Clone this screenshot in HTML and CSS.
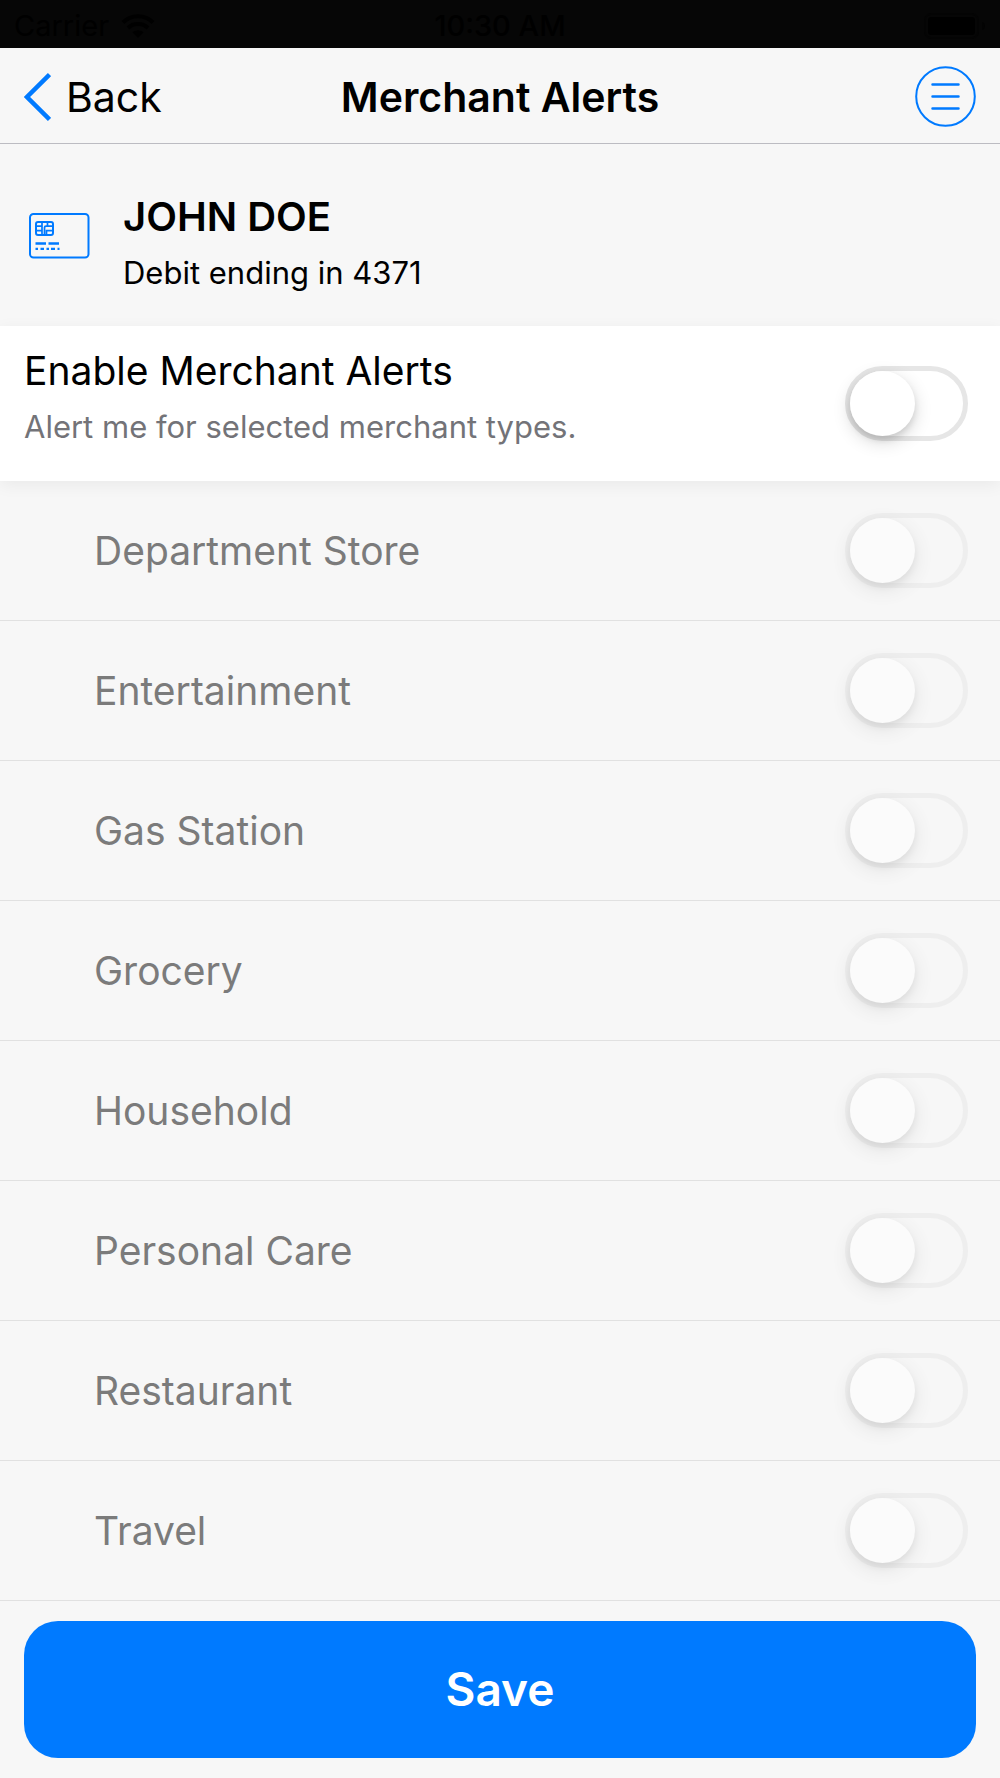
FILE: index.html
```html
<!DOCTYPE html>
<html lang="en">
<head>
<meta charset="utf-8">
<meta name="viewport" content="width=device-width, initial-scale=1">
<title>Merchant Alerts</title>
<link rel="stylesheet" href="styles.css">
</head>
<body>
<div class="status-bar">
  <div class="carrier">
    <span>Carrier</span>
    <svg width="34" height="24" viewBox="0 0 34 24" aria-hidden="true">
      <g fill="none" stroke="#000" stroke-width="4">
        <path d="M2 8.500C10 .2 24 .2 32 8.500"/>
        <path d="M7 14C12.500 8.800 21.500 8.800 27 14"/>
      </g>
      <path fill="#000" d="M11.500 18.200C14.500 15.500 19.500 15.500 22.500 18.200L17 24Z"/>
    </svg>
  </div>
  <span class="clock">10:30 AM</span>
  <svg class="battery" width="62" height="26" viewBox="0 0 62 26" aria-hidden="true">
    <rect x="1" y="1" width="53" height="24" rx="6" fill="none" stroke="#040404" stroke-width="2"/>
    <rect x="4" y="4" width="47" height="18" rx="3" fill="#000"/>
    <path d="M58 9c4 1 4 7 0 8z" fill="#030303"/>
  </svg>
</div>

<header class="nav-bar">
  <a class="back" href="#">
    <svg width="27" height="50" viewBox="0 0 27 50" aria-hidden="true">
      <path d="M25.500 2.500L3 25L25.500 47.500" fill="none" stroke="#007aff" stroke-width="4.500"/>
    </svg>
    <span>Back</span>
  </a>
  <h1 class="title">Merchant Alerts</h1>
  <button class="menu" type="button" aria-label="Menu">
    <svg width="61" height="61" viewBox="0 0 61 61" aria-hidden="true">
      <g fill="none" stroke="#007aff" stroke-width="2" stroke-linecap="round">
        <circle cx="30.500" cy="30.500" r="29.300"/>
        <path d="M17.500 18.500H43.500M17.500 30.500H43.500M17.500 42.500H43.500" stroke-width="2.500"/>
      </g>
    </svg>
  </button>
</header>

<main>
  <section class="account">
    <svg class="card-icon" width="61" height="46" viewBox="0 0 61 46" aria-hidden="true">
      <g fill="none" stroke="#007aff" stroke-width="2">
        <rect x="1" y="1" width="58.500" height="43.500" rx="3.500"/>
        <rect x="7" y="9" width="17" height="13" rx="2"/>
        <path d="M7 13.200H13M7 17.600H13M13 9V22M15.500 22V14.500Q15.500 13.200 17 13.200H24M18.500 9V13.200M17.500 22V17.600H24" stroke-width="1.700"/>
        <path d="M6.500 30.500H17M19.500 30.500H30" stroke-width="2.300"/>
        <path d="M6.500 35.800H9M11.500 35.800H15M17.500 35.800H20M22 35.800H26M28.500 35.800H30.500" stroke-width="2.300"/>
      </g>
    </svg>
    <div>
      <h2 class="holder">JOHN DOE</h2>
      <p class="card-number">Debit ending in 4371</p>
    </div>
  </section>

  <form>
    <div class="enable">
      <div>
        <label class="enable-label" for="enable">Enable Merchant Alerts</label>
        <p class="hint" id="hint">Alert me for selected merchant types.</p>
      </div>
      <input class="toggle" type="checkbox" role="switch" id="enable" aria-describedby="hint">
    </div>
    <ul class="types">
      <li class="type"><label for="department">Department Store</label><input class="toggle" type="checkbox" role="switch" id="department" disabled></li>
      <li class="type"><label for="entertainment">Entertainment</label><input class="toggle" type="checkbox" role="switch" id="entertainment" disabled></li>
      <li class="type"><label for="gas">Gas Station</label><input class="toggle" type="checkbox" role="switch" id="gas" disabled></li>
      <li class="type"><label for="grocery">Grocery</label><input class="toggle" type="checkbox" role="switch" id="grocery" disabled></li>
      <li class="type"><label for="household">Household</label><input class="toggle" type="checkbox" role="switch" id="household" disabled></li>
      <li class="type"><label for="personal">Personal Care</label><input class="toggle" type="checkbox" role="switch" id="personal" disabled></li>
      <li class="type"><label for="restaurant">Restaurant</label><input class="toggle" type="checkbox" role="switch" id="restaurant" disabled></li>
      <li class="type"><label for="travel">Travel</label><input class="toggle" type="checkbox" role="switch" id="travel" disabled></li>
    </ul>
    <div class="actions">
      <button class="save" type="submit">Save</button>
    </div>
  </form>
</main>
</body>
</html>
```
FILE: styles.css
```css
* {
  box-sizing: border-box;
  margin: 0;
  padding: 0;
}

body {
  background: #f7f7f7;
  color: #000;
  font-family: Inter, "Liberation Sans", sans-serif;
  font-size: 39px;
  line-height: 48px;
}

.status-bar {
  display: grid;
  grid-template-columns: 1fr auto 1fr;
  align-items: center;
  height: 48px;
  padding: 2px 14px 0;
  background: #060606;
  font-size: 29px;
}

.carrier {
  display: flex;
  align-items: center;
  gap: 12px;
}

.clock {
  font-weight: 500;
}

.battery {
  justify-self: end;
}

.nav-bar {
  display: grid;
  grid-template-columns: 1fr auto 1fr;
  align-items: center;
  height: 96px;
  padding: 2px 24px 0;
  border-bottom: 1px solid #bcbcc2;
}

.back {
  display: flex;
  align-items: center;
  gap: 15px;
  color: #000;
  font-size: 41px;
  text-decoration: none;
}

.title {
  font-size: 41px;
  font-weight: 600;
}

.menu {
  display: flex;
  justify-self: end;
  border: 0;
  background: none;
}

.account {
  display: flex;
  align-items: flex-start;
  gap: 33px;
  padding: 49px 29px 31px;
}

.card-icon {
  flex: none;
  margin-top: 20px;
}

.holder {
  font-size: 40px;
  font-weight: 600;
}

.card-number,
.hint {
  margin-top: 10px;
  font-size: 31px;
  line-height: 44px;
}

.enable {
  display: flex;
  align-items: center;
  justify-content: space-between;
  padding: 21px 32px 32px 24px;
  background: #fff;
  box-shadow: 0 4px 16px rgba(0, 0, 0, 0.06);
}

.enable .toggle {
  align-self: flex-end;
}

.hint {
  color: #737378;
}

.types {
  list-style: none;
}

.type {
  display: flex;
  align-items: center;
  justify-content: space-between;
  padding: 32px 32px 32px 94px;
  border-bottom: 1px solid #e1e1e1;
  color: #7b7b7b;
}

.toggle {
  appearance: none;
  flex: none;
  width: 123px;
  height: 75px;
  border: 5px solid #e6e6e6;
  border-radius: 38px;
}

.enable .toggle {
  margin-bottom: 8px;
}

.toggle::before {
  content: "";
  display: block;
  width: 65px;
  height: 65px;
  border-radius: 50%;
  background: #fff;
  box-shadow: 0 6px 18px rgba(0, 0, 0, 0.16), 0 4px 6px rgba(0, 0, 0, 0.1);
}

.toggle:checked {
  border-color: #007aff;
  background: #007aff;
}

.toggle:checked::before {
  margin-left: auto;
}

.toggle:disabled {
  opacity: 0.5;
}

.actions {
  padding: 20px 24px;
}

.save {
  display: block;
  width: 100%;
  padding: 44px 24px;
  border: 0;
  border-radius: 34px;
  background: #007aff;
  color: #fff;
  font: 600 46px/49px Inter, "Liberation Sans", sans-serif;
}
```
